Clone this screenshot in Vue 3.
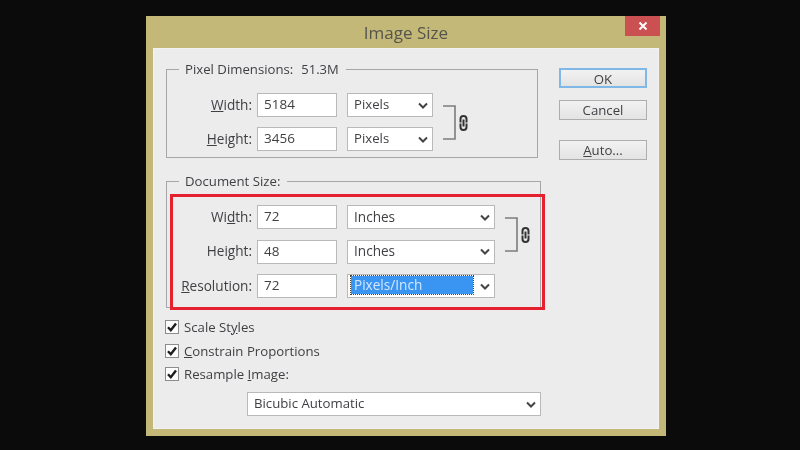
<script setup>
const pixelRows = [
  { before: '', key: 'W', after: 'idth:', value: '5184', unit: 'Pixels' },
  { before: '', key: 'H', after: 'eight:', value: '3456', unit: 'Pixels' }
]
const docRows = [
  { before: 'Wi', key: 'd', after: 'th:', value: '72', unit: 'Inches' },
  { before: 'Hei', key: 'g', after: 'ht:', value: '48', unit: 'Inches' },
  { before: '', key: 'R', after: 'esolution:', value: '72', unit: 'Pixels/Inch', active: true }
]
const checks = [
  { before: 'Scale St', key: 'y', after: 'les' },
  { before: '', key: 'C', after: 'onstrain Proportions' },
  { before: 'Resample ', key: 'I', after: 'mage:' }
]
const chain = 'M2.5 8.5V5a3 3 0 0 1 6 0V8.5M2.5 9.5V13a3 3 0 0 0 6 0V9.5M5.5 5.5v7'
</script>

<template>
  <div class="page">
    <div class="dialog">
      <div class="titlebar">
        <span class="title">Image Size</span>
        <div class="close">
          <svg width="12" height="12" viewBox="0 0 12 12"><path d="M2.5 2.5l7 7M9.5 2.5l-7 7" stroke="#fff" stroke-width="2" fill="none" /></svg>
        </div>
      </div>
      <div class="client">
        <div class="left">
          <section class="group pixel-group">
            <span class="legend">Pixel Dimensions:<span class="size">51.3M</span></span>
            <div class="rows">
              <div v-for="row in pixelRows" :key="row.key" class="row">
                <label class="label">{{ row.before }}<u>{{ row.key }}</u>{{ row.after }}</label>
                <div class="input">{{ row.value }}</div>
                <div class="select short">
                  <span class="value">{{ row.unit }}</span>
                  <svg class="chev" width="10" height="7" viewBox="0 0 10 7"><path d="M1 1.5l4 4 4-4" stroke="#444" stroke-width="2" fill="none" /></svg>
                </div>
              </div>
            </div>
            <div class="linker">
              <svg class="bracket" width="13" height="35" viewBox="0 0 13 35"><path d="M0 1h12v33H0" stroke="#7c7c7c" stroke-width="1.6" fill="none" /></svg>
              <svg class="chain" width="11" height="18" viewBox="0 0 11 18"><path :d="chain" stroke="#333" stroke-width="2" fill="none" /></svg>
            </div>
          </section>

          <section class="group doc-group">
            <span class="legend">Document Size:</span>
            <div class="rows">
              <div v-for="row in docRows" :key="row.key" class="row">
                <label class="label">{{ row.before }}<u>{{ row.key }}</u>{{ row.after }}</label>
                <div class="input">{{ row.value }}</div>
                <div class="select long">
                  <span class="value" :class="{ active: row.active }">{{ row.unit }}</span>
                  <svg class="chev" width="10" height="7" viewBox="0 0 10 7"><path d="M1 1.5l4 4 4-4" stroke="#444" stroke-width="2" fill="none" /></svg>
                </div>
              </div>
            </div>
            <div class="linker">
              <svg class="bracket" width="13" height="35" viewBox="0 0 13 35"><path d="M0 1h12v33H0" stroke="#7c7c7c" stroke-width="1.6" fill="none" /></svg>
              <svg class="chain" width="11" height="18" viewBox="0 0 11 18"><path :d="chain" stroke="#333" stroke-width="2" fill="none" /></svg>
            </div>
            <div class="redbox"></div>
          </section>

          <div class="checks">
            <div v-for="c in checks" :key="c.key" class="check">
              <span class="box">
                <svg width="12" height="12" viewBox="0 0 12 12"><path d="M2 6.2l2.8 3L10 2.5" stroke="#1c1c1c" stroke-width="2.4" fill="none" /></svg>
              </span>
              <span class="check-text">{{ c.before }}<u>{{ c.key }}</u>{{ c.after }}</span>
            </div>
          </div>

          <div class="select resample">
            <span class="value">Bicubic Automatic</span>
            <svg class="chev" width="10" height="7" viewBox="0 0 10 7"><path d="M1 1.5l4 4 4-4" stroke="#444" stroke-width="2" fill="none" /></svg>
          </div>
        </div>

        <div class="buttons">
          <button class="btn primary">OK</button>
          <button class="btn">Cancel</button>
          <button class="btn auto"><u>A</u>uto...</button>
        </div>
      </div>
    </div>
  </div>
</template>

<style>
html, body { margin: 0; background: #0a0a0a; }
</style>

<style scoped>
.page {
  width: 800px;
  height: 450px;
  box-sizing: border-box;
  padding: 16px 0 0 146px;
  background: #0b0b0c;
  overflow: hidden;
  font-family: "Open Sans", "Noto Sans", sans-serif;
  font-size: 13.2px;
  color: #3f3f44;
}
.dialog {
  width: 520px;
  height: 420px;
  background: #c4b878;
  display: flex;
  flex-direction: column;
  filter: blur(0.45px);
}
.titlebar {
  position: relative;
  height: 32px;
  display: flex;
  align-items: center;
  justify-content: center;
  flex: none;
}
.title { font-size: 17px; color: #55554c; margin-top: 1px; }
.close {
  position: absolute;
  top: 0;
  right: 6px;
  width: 35px;
  height: 20px;
  background: #ca5052;
  display: flex;
  align-items: center;
  justify-content: center;
}
.client {
  flex: 1;
  margin: 0 7px 7px;
  background: #ececec;
  box-sizing: border-box;
  padding: 21px 0 0 13px;
  display: flex;
  align-items: flex-start;
  box-shadow: inset 0 0 0 1px #f2f2f2;
}
.left { width: 393px; flex: none; }
.group {
  position: relative;
  box-sizing: border-box;
  border: 1px solid #a6a6a6;
  padding-top: 23px;
}
.pixel-group { width: 372px; height: 89px; }
.doc-group { width: 375px; height: 127px; margin-top: 23px; }
.legend {
  position: absolute;
  top: -10px;
  left: 12px;
  padding: 0 7px 0 6px;
  background: #ececec;
  line-height: 18px;
  white-space: nowrap;
}
.size { margin-left: 8px; font-size: 13px; }
.rows { display: flex; flex-direction: column; gap: 10px; }
.doc-group .rows { gap: 10.5px; }
.row { display: flex; align-items: center; height: 24px; }
.label { width: 85px; margin-right: 5px; font-size: 13.6px; text-align: right; white-space: nowrap; padding-bottom: 2px; }
.input {
  width: 80px;
  height: 24px;
  box-sizing: border-box;
  border: 1px solid #b9b9b9;
  background: #fff;
  padding-left: 6px;
  font-size: 13.5px;
  line-height: 21px;
  margin-right: 10px;
}
.select {
  height: 24px;
  box-sizing: border-box;
  border: 1px solid #b9b9b9;
  background: #fff;
  display: flex;
  align-items: center;
  justify-content: space-between;
  padding: 0 4px 0 6px;
  white-space: nowrap;
}
.value { margin-top: -2px; }
.short { width: 86px; }
.long { width: 148px; font-size: 13.6px; }
.long .value.active {
  flex: none;
  width: 122px;
  height: 18px;
  box-sizing: border-box;
  margin-left: -3px;
  padding-left: 3px;
  background: #3a94f2;
  outline: 1px dotted #4a4030;
  color: #d3e8ff;
  line-height: 17px;
}
.chev { flex: none; }
.linker { position: absolute; top: 35px; left: 276px; display: flex; align-items: center; gap: 2px; }
.doc-group .linker { left: 338px; }
.redbox {
  position: absolute;
  top: 12px;
  left: 3px;
  width: 375px;
  height: 116px;
  box-sizing: border-box;
  border: 3px solid #e5202f;
}
.checks {
  margin-top: 12px;
  margin-left: -1px;
  display: flex;
  flex-direction: column;
  gap: 9.5px;
}
.check { display: flex; align-items: center; gap: 5px; height: 14px; white-space: nowrap; }
.box {
  width: 14px;
  height: 14px;
  box-sizing: border-box;
  border: 1px solid #8c8c8c;
  background: #fdfdfd;
  display: flex;
  align-items: center;
  justify-content: center;
}
.resample { width: 294px; margin: 11px 0 0 81px; }
.buttons {
  display: flex;
  flex-direction: column;
  width: 88px;
  margin-top: -1px;
}
.btn {
  width: 88px;
  height: 20px;
  box-sizing: border-box;
  padding: 0;
  border: 1px solid #aeaeae;
  background: linear-gradient(#f2f2f2, #e3e3e3);
  font: inherit;
  color: #3f3f44;
  line-height: 18px;
  margin-bottom: 12px;
}
.primary { border: 2px solid #7fb8e6; }
.auto { margin-top: 8px; }
</style>
